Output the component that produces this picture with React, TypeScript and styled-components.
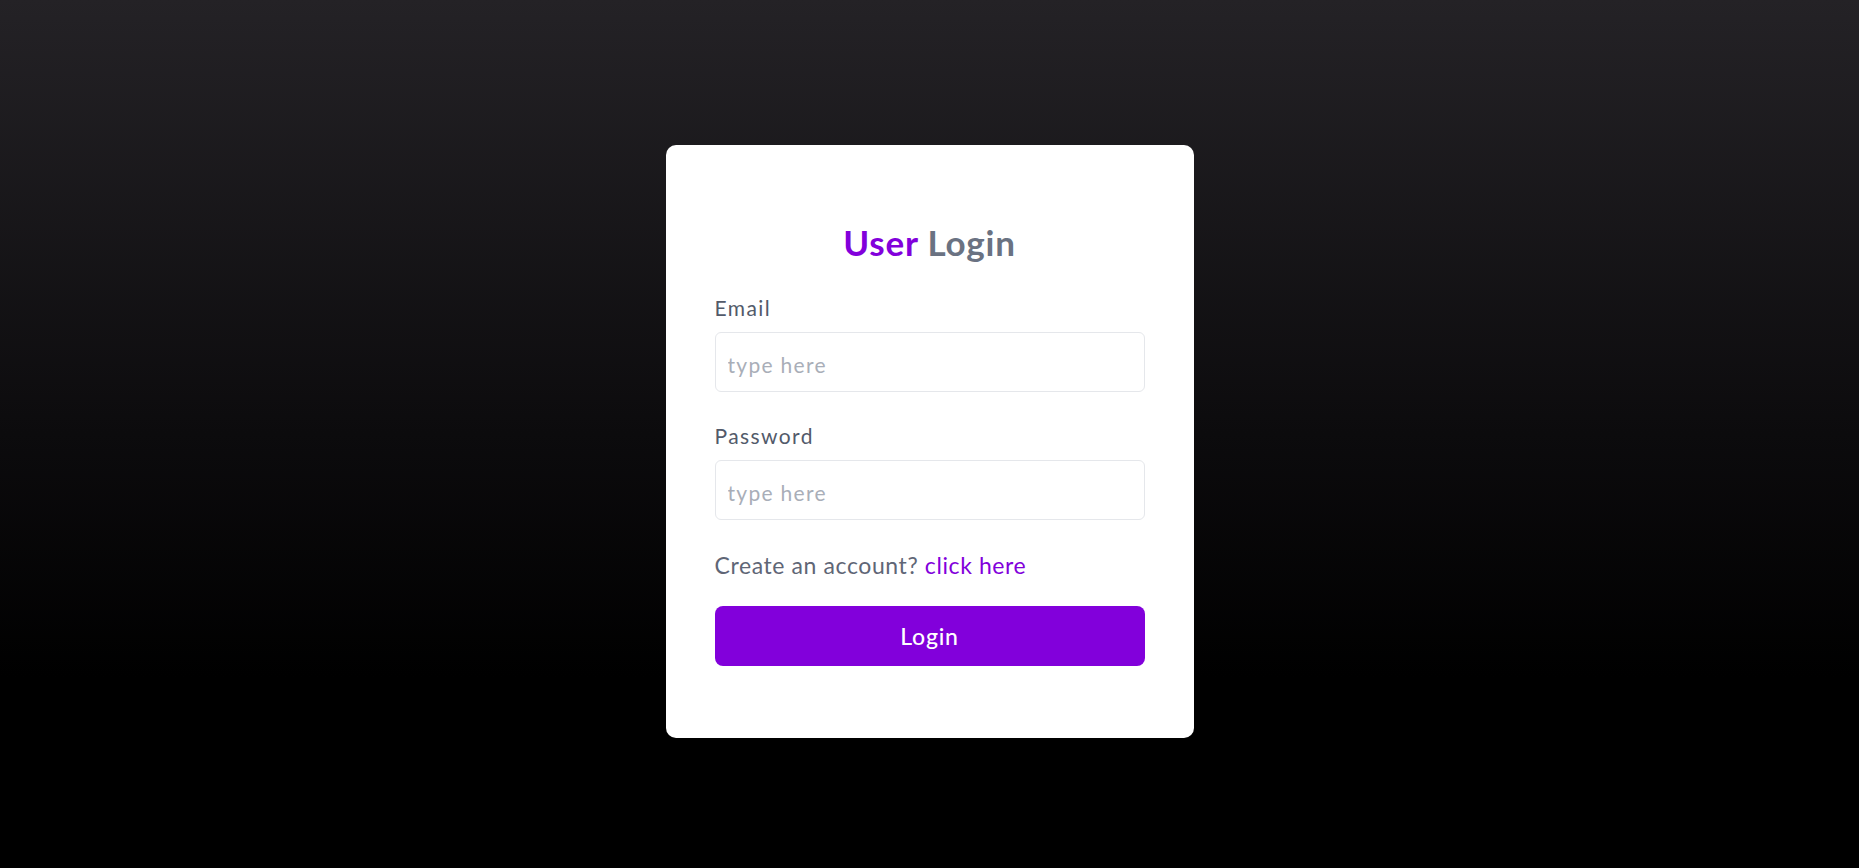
import React from "react";
import styled, {createGlobalStyle} from "styled-components";

const GlobalStyle = createGlobalStyle`
  html, body {
    margin: 0;
    padding: 0;
  }
  body {
    font-family: Lato, "Noto Sans", sans-serif;
    background: #000;
  }
  * {
    box-sizing: border-box;
  }
`;

const Page = styled.div`
  min-height: 100vh;
  padding-top: 14px;
  display: flex;
  justify-content: center;
  align-items: center;
  background: linear-gradient(to bottom, #242226 0%, #0c0b0d 50%, #000 78%);
`;

const Card = styled.form`
  width: 528px;
  padding: 77px 49px 72px;
  background: #fff;
  border-radius: 10px;
  display: flex;
  flex-direction: column;
`;

const Title = styled.h1`
  margin: 0 0 32px;
  text-align: center;
  font-size: 35px;
  line-height: 40px;
  font-weight: 700;
  letter-spacing: 0.8px;
  color: #6a7282;

  span {
    color: #8200db;
  }
`;

const Field = styled.div`
  display: flex;
  flex-direction: column;
  gap: 10px;
  margin-bottom: 30px;
`;

const Label = styled.label`
  font-size: 21px;
  line-height: 28px;
  letter-spacing: 1.4px;
  color: #525a6a;
`;

const Input = styled.input`
  height: 60px;
  width: 100%;
  padding: 5px 12px 0;
  border: 1px solid #e5e7eb;
  border-radius: 6px;
  font-family: inherit;
  font-size: 21px;
  letter-spacing: 1.3px;
  color: #364153;
  outline: none;

  &::placeholder {
    color: #a9aeb8;
  }
`;

const Hint = styled.p`
  margin: 0 0 26px;
  font-size: 23px;
  line-height: 30px;
  letter-spacing: 0.6px;
  color: #5f6676;

  a {
    color: #8200db;
    text-decoration: none;
  }
`;

const Button = styled.button`
  height: 60px;
  width: 100%;
  border: none;
  border-radius: 8px;
  background: #8200db;
  color: #fff;
  font-family: inherit;
  font-size: 23px;
  font-weight: 500;
  letter-spacing: 0.8px;
  cursor: pointer;
`;

export default function App() {
  return (
    <>
      <GlobalStyle/>
      <Page>
        <Card onSubmit={e => e.preventDefault()}>
          <Title><span>User</span> Login</Title>
          <Field>
            <Label htmlFor="email">Email</Label>
            <Input id="email" type="email" placeholder="type here"/>
          </Field>
          <Field>
            <Label htmlFor="password">Password</Label>
            <Input id="password" type="password" placeholder="type here"/>
          </Field>
          <Hint>Create an account? <a href="#">click here</a></Hint>
          <Button type="submit">Login</Button>
        </Card>
      </Page>
    </>
  );
}
